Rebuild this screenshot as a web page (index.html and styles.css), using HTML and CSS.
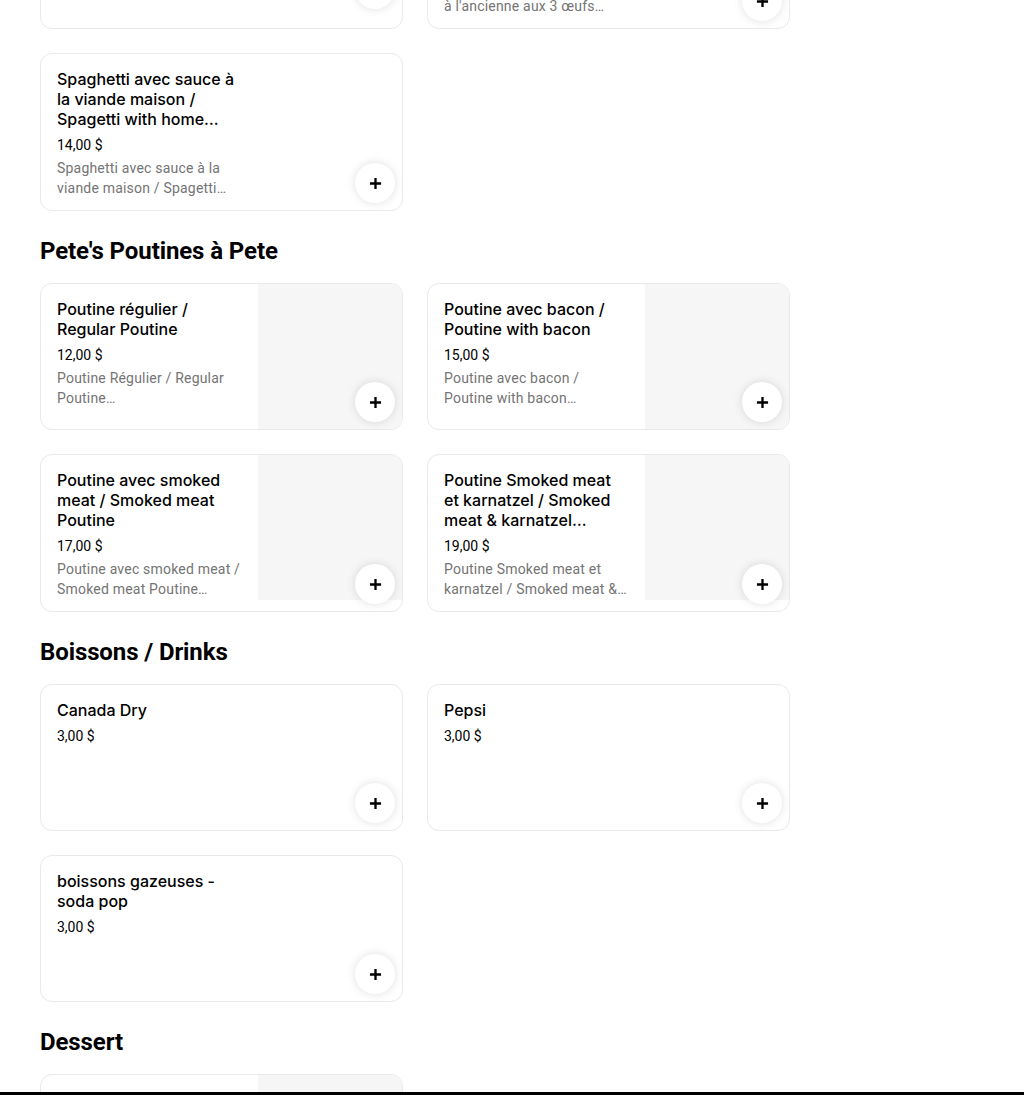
FILE: index.html
```html
<!DOCTYPE html>
<html lang="fr">
<head>
<meta charset="utf-8">
<title>Menu</title>
<link rel="stylesheet" href="styles.css">
</head>
<body>
<main class="menu">
  <section class="section section--continued">
    <div class="grid">
      <article class="card">
        <div class="card__body">
          <h3 class="card__name">Omelette jambon / Ham omelette</h3>
          <p class="card__price">13,00 $</p>
          <p class="card__desc">Omelette au jambon</p>
        </div>
        <button class="card__add card__add--raised" aria-label="Ajouter"><svg viewBox="0 0 14 14"><path d="M7 1v12M1 7h12" stroke="#000" stroke-width="2.5" fill="none"/></svg></button>
      </article>
      <article class="card">
        <div class="card__body">
          <h3 class="card__name">Déjeuner à l'ancienne / Old fashioned breakfast with three eggs</h3>
          <p class="card__price">16,00 $</p>
          <p class="card__desc">Le déjeuner classique<br>à l'ancienne aux 3 œufs accompagnés de bacon, jambon et saucisses</p>
        </div>
        <button class="card__add" aria-label="Ajouter"><svg viewBox="0 0 14 14"><path d="M7 1v12M1 7h12" stroke="#000" stroke-width="2.5" fill="none"/></svg></button>
      </article>
      <article class="card">
        <div class="card__body">
          <h3 class="card__name">Spaghetti avec sauce à la viande maison / Spagetti with home made meat sauce</h3>
          <p class="card__price">14,00 $</p>
          <p class="card__desc">Spaghetti avec sauce à la viande maison / Spagetti with home made meat sauce</p>
        </div>
        <button class="card__add" aria-label="Ajouter"><svg viewBox="0 0 14 14"><path d="M7 1v12M1 7h12" stroke="#000" stroke-width="2.5" fill="none"/></svg></button>
      </article>
    </div>
  </section>

  <section class="section">
    <h2 class="section__title">Pete's Poutines à Pete</h2>
    <div class="grid">
      <article class="card">
        <div class="card__body">
          <h3 class="card__name">Poutine régulier / Regular Poutine</h3>
          <p class="card__price">12,00 $</p>
          <p class="card__desc">Poutine Régulier / Regular Poutine<br>Frites, fromage en grains et sauce</p>
        </div>
        <div class="card__img"></div>
        <button class="card__add" aria-label="Ajouter"><svg viewBox="0 0 14 14"><path d="M7 1v12M1 7h12" stroke="#000" stroke-width="2.5" fill="none"/></svg></button>
      </article>
      <article class="card">
        <div class="card__body">
          <h3 class="card__name">Poutine avec bacon / Poutine with bacon</h3>
          <p class="card__price">15,00 $</p>
          <p class="card__desc">Poutine avec bacon /<br>Poutine with bacon<br>Frites, fromage, sauce et bacon</p>
        </div>
        <div class="card__img"></div>
        <button class="card__add" aria-label="Ajouter"><svg viewBox="0 0 14 14"><path d="M7 1v12M1 7h12" stroke="#000" stroke-width="2.5" fill="none"/></svg></button>
      </article>
      <article class="card">
        <div class="card__body">
          <h3 class="card__name">Poutine avec smoked meat / Smoked meat Poutine</h3>
          <p class="card__price">17,00 $</p>
          <p class="card__desc">Poutine avec smoked meat / Smoked meat Poutine<br>Frites, fromage, sauce et smoked meat</p>
        </div>
        <div class="card__img"></div>
        <button class="card__add" aria-label="Ajouter"><svg viewBox="0 0 14 14"><path d="M7 1v12M1 7h12" stroke="#000" stroke-width="2.5" fill="none"/></svg></button>
      </article>
      <article class="card">
        <div class="card__body">
          <h3 class="card__name">Poutine Smoked meat et karnatzel / Smoked meat &amp; karnatzel Poutine</h3>
          <p class="card__price">19,00 $</p>
          <p class="card__desc">Poutine Smoked meat et karnatzel / Smoked meat &amp; karnatzel Poutine</p>
        </div>
        <div class="card__img"></div>
        <button class="card__add" aria-label="Ajouter"><svg viewBox="0 0 14 14"><path d="M7 1v12M1 7h12" stroke="#000" stroke-width="2.5" fill="none"/></svg></button>
      </article>
    </div>
  </section>

  <section class="section">
    <h2 class="section__title">Boissons / Drinks</h2>
    <div class="grid">
      <article class="card">
        <div class="card__body">
          <h3 class="card__name">Canada Dry</h3>
          <p class="card__price">3,00 $</p>
        </div>
        <button class="card__add" aria-label="Ajouter"><svg viewBox="0 0 14 14"><path d="M7 1v12M1 7h12" stroke="#000" stroke-width="2.5" fill="none"/></svg></button>
      </article>
      <article class="card">
        <div class="card__body">
          <h3 class="card__name">Pepsi</h3>
          <p class="card__price">3,00 $</p>
        </div>
        <button class="card__add" aria-label="Ajouter"><svg viewBox="0 0 14 14"><path d="M7 1v12M1 7h12" stroke="#000" stroke-width="2.5" fill="none"/></svg></button>
      </article>
      <article class="card">
        <div class="card__body">
          <h3 class="card__name">boissons gazeuses - soda pop</h3>
          <p class="card__price">3,00 $</p>
        </div>
        <button class="card__add" aria-label="Ajouter"><svg viewBox="0 0 14 14"><path d="M7 1v12M1 7h12" stroke="#000" stroke-width="2.5" fill="none"/></svg></button>
      </article>
    </div>
  </section>

  <section class="section">
    <h2 class="section__title">Dessert</h2>
    <div class="grid">
      <article class="card">
        <div class="card__body">
          <h3 class="card__name">Gâteau au fromage / Cheesecake</h3>
          <p class="card__price">7,00 $</p>
          <p class="card__desc">Gâteau au fromage maison / Homemade cheesecake</p>
        </div>
        <div class="card__img"></div>
        <button class="card__add" aria-label="Ajouter"><svg viewBox="0 0 14 14"><path d="M7 1v12M1 7h12" stroke="#000" stroke-width="2.5" fill="none"/></svg></button>
      </article>
    </div>
  </section>
</main>
<div class="bottom-bar"></div>
</body>
</html>
```
FILE: styles.css
```css
* { box-sizing: border-box; }

html, body {
  margin: 0;
  padding: 0;
  background: #fff;
}

body {
  font-family: Roboto, "Liberation Sans", sans-serif;
  color: #000;
  overflow: hidden;
}

.menu {
  width: 830px;
  padding: 0 40px;
}

.section--continued {
  margin-top: -129px;
}

.section__title {
  margin: 24px 0 16px;
  font-size: 24px;
  line-height: 32px;
  font-weight: 700;
  letter-spacing: -0.1px;
}

.grid {
  display: grid;
  grid-template-columns: 363px 363px;
  gap: 24px;
}

.card {
  position: relative;
  display: flex;
  min-height: 147px;
  border: 1px solid #e9e9e9;
  border-radius: 12px;
  overflow: hidden;
  background: #fff;
}

.card__body {
  flex: none;
  width: 217px;
  padding: 15px 16px 12px;
}

.card__name {
  margin: 0;
  font-family: Inter, Roboto, sans-serif;
  font-size: 16px;
  line-height: 20px;
  font-weight: 500;
  letter-spacing: 0;
  display: -webkit-box;
  -webkit-box-orient: vertical;
  -webkit-line-clamp: 3;
  overflow: hidden;
}

.card__price {
  margin: 6px 0 0;
  font-size: 14px;
  line-height: 20px;
}

.card__desc {
  margin: 3px 0 0;
  font-size: 14px;
  line-height: 20px;
  color: #747474;
  letter-spacing: 0.2px;
  display: -webkit-box;
  -webkit-box-orient: vertical;
  -webkit-line-clamp: 2;
  overflow: hidden;
}

.card__img {
  flex: 1;
  height: 145px;
  background: #f6f6f6;
}

.card__add {
  position: absolute;
  right: 7px;
  bottom: 7px;
  width: 40px;
  height: 40px;
  padding: 0;
  border: 0;
  border-radius: 50%;
  background: #fff;
  box-shadow: 0 0 10px rgba(0, 0, 0, 0.13);
  display: flex;
  align-items: center;
  justify-content: center;
  cursor: pointer;
}

.card__add svg {
  display: block;
  width: 13px;
  height: 13px;
}

.card__add--raised {
  bottom: 19px;
}

.bottom-bar {
  position: fixed;
  left: 0;
  right: 0;
  bottom: 0;
  height: 3px;
  background: #000;
}
```
